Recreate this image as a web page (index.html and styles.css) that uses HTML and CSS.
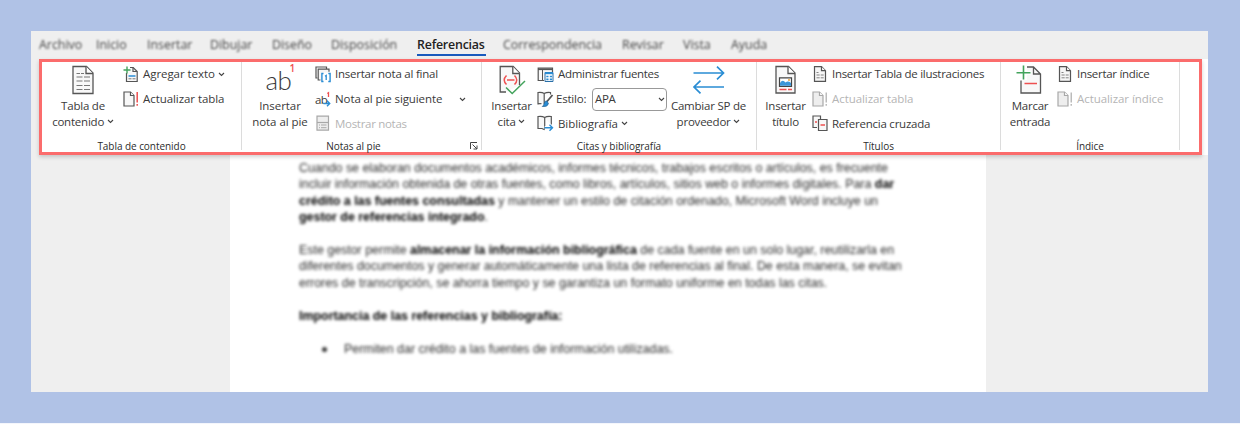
FILE: index.html
```html
<!DOCTYPE html>
<html lang="es">
<head>
<meta charset="utf-8">
<title>Referencias</title>
<link rel="stylesheet" href="styles.css">
</head>
<body>
<svg class="defs" width="0" height="0">
  <defs>
    <symbol id="chev" viewBox="0 0 7 5"><path d="M1 1l2.500 2.500L6 1" fill="none" stroke="#444" stroke-width="1.100"/></symbol>
    <symbol id="page-lines" viewBox="0 0 14 16"><path d="M1.500.7h7l4 4v10.600h-11z" fill="#f6f6f6" stroke="#555" stroke-width="1.200"/><path d="M8.500.7v4h4" fill="#fff" stroke="#555" stroke-width="1.200"/><path d="M3.500 6.500h2M3.500 9h3.200M7.700 9h3M3.500 11.800h3.200M7.700 11.800h3" stroke="#777" stroke-width=".9"/></symbol>
    <symbol id="page-off" viewBox="0 0 16 17"><path d="M1 1h6.500l3.500 3.500V15H1z" fill="#eee" stroke="#a8a8a8" stroke-width="1.200"/><path d="M7.500 1v3.500H11" fill="#fff" stroke="#a8a8a8" stroke-width="1.200"/><path d="M14.200 1.500v10M14.200 13v1.700" stroke="#aaa" stroke-width="1.200"/></symbol>
  </defs>
</svg>
<div class="app">
  <nav class="tabs">
    <span class="tab t1">Archivo</span><span class="tab t2">Inicio</span><span class="tab t3">Insertar</span><span class="tab t4">Dibujar</span><span class="tab t5">Diseño</span><span class="tab t6">Disposición</span><span class="tab t7 active"><b>Referencias</b></span><span class="tab t8">Correspondencia</span><span class="tab t9">Revisar</span><span class="tab t10">Vista</span><span class="tab t11">Ayuda</span>
  </nav>
  <div class="ribbon-row">
  <div class="ribbon">
    <section class="group g1">
      <div class="body">
        <div class="big">
          <svg class="bicon" width="24" height="30" viewBox="0 0 24 30"><path d="M2 1.500h13.500L22 8v20.500H2z" fill="#f8f8f8" stroke="#555" stroke-width="1.300"/><path d="M15 1.500V8.500h7" fill="#fff" stroke="#555" stroke-width="1.300"/><path d="M5.500 8.500h3.500M10 8.500h3M5.500 12h6M13 12h6M5.500 16h6M13 16h6M5.500 20.500h6M13 20.500h6M5.500 24.500h6M13 24.500h6" stroke="#777" stroke-width="1.100"/></svg>
          <span>Tabla de</span><span>contenido <svg class="chev"><use href="#chev"/></svg></span>
        </div>
        <div class="stack">
          <div class="cmd"><svg width="16" height="17" viewBox="0 0 16 17"><path d="M3.500 7v8.500h10.700V5.500l-4-4H7" fill="#f8f8f8" stroke="#555" stroke-width="1.200"/><path d="M10 1.500v4h4" fill="none" stroke="#555" stroke-width="1.200"/><path d="M5.500 12.800h3M9.500 12.800h3" stroke="#777"/><path d="M5.500 10h7" stroke="#2a8dd4" stroke-width="1.500"/><path d="M4 .5v7M.5 4h7" stroke="#43a35c" stroke-width="1.400"/></svg><span class="txt">Agregar texto</span><svg class="chev"><use href="#chev"/></svg></div>
          <div class="cmd"><svg width="16" height="17" viewBox="0 0 16 17"><path d="M1 1h6.500l3.500 3.500V15H1z" fill="#f8f8f8" stroke="#555" stroke-width="1.200"/><path d="M7.500 1v3.500H11" fill="#fff" stroke="#555" stroke-width="1.200"/><path d="M14.200 1v10.500M14.200 13v1.700" stroke="#ee5050" stroke-width="1.500"/></svg><span class="txt">Actualizar tabla</span></div>
        </div>
      </div>
      <div class="caption">Tabla de contenido</div>
    </section>
    <section class="group g2">
      <div class="body">
        <div class="big">
          <span class="bicon ab">ab<sup>1</sup></span>
          <span>Insertar</span><span>nota al pie</span>
        </div>
        <div class="stack">
          <div class="cmd"><svg width="16" height="17" viewBox="0 0 16 17"><path d="M2.500 12H1V1h10.500v2" fill="none" stroke="#555" stroke-width="1.200"/><path d="M5.500 14H3.200V3.200h10.800v2.500" fill="#f5f5f5" stroke="#555" stroke-width="1.200"/><path d="M6 6.500h10v10H6z" fill="#fff"/><path d="M8.500 7.500H6.900v8h1.600M13.300 7.500h1.800v8h-1.800" fill="none" stroke="#2a8dd4" stroke-width="1.400"/><path d="M10 10.300l1.200-.8V14" fill="none" stroke="#2a8dd4" stroke-width="1.300"/></svg><span class="txt n22">Insertar nota al final</span></div>
          <div class="cmd"><span class="abs">ab<svg width="16" height="17" viewBox="0 0 16 17"><path d="M12.300 2.500l1.200-.8V6" fill="none" stroke="#ee5050" stroke-width="1.300"/><path d="M8.500 12.500h6M12 9.800l2.700 2.700L12 15.200" fill="none" stroke="#2a8dd4" stroke-width="1.400"/></svg></span><span class="txt n10">Nota al pie siguiente</span><svg class="chev far"><use href="#chev"/></svg></div>
          <div class="cmd off"><svg width="16" height="17" viewBox="0 0 16 17"><path d="M2 1.200h11.500v14H2z" fill="#eee" stroke="#a8a8a8" stroke-width="1.200"/><path d="M2 7.500h11.500" stroke="#a8a8a8" stroke-width="1.200"/><path d="M4 10h1M6 10h5.500M4 12.700h1M6 12.700h5.500" stroke="#a8a8a8"/></svg><span class="txt n30">Mostrar notas</span></div>
        </div>
      </div>
      <div class="caption">Notas al pie</div>
      <svg class="launch" width="8" height="8" viewBox="0 0 8 8"><path d="M.5 7V.5H7M2.500 2.500L7 7M7 3.500V7H3.500" fill="none" stroke="#444"/></svg>
    </section>
    <section class="group g3">
      <div class="body">
        <div class="big">
          <svg class="bicon cite" width="28" height="30" viewBox="0 0 28 30"><path d="M8 27H2.200V1.500h13l6.300 6.500V20" fill="#f8f8f8" stroke="#555" stroke-width="1.300"/><path d="M14.800 1.500V8.500h6.700" fill="#fff" stroke="#555" stroke-width="1.300"/><path d="M8.500 10.500q-4.500 4.500 0 9M16.500 10.500q4.500 4.500 0 9M9 15h7.500" fill="none" stroke="#ee5050" stroke-width="1.500"/><path d="M8 22.500l6.200 6L27 16" fill="none" stroke="#43a35c" stroke-width="1.500"/></svg>
          <span>Insertar</span><span>cita <svg class="chev"><use href="#chev"/></svg></span>
        </div>
        <div class="stack">
          <div class="cmd"><svg width="17" height="17" viewBox="0 0 17 17"><path d="M7 14.500H1.200V2h14.300v4" fill="#f8f8f8" stroke="#555" stroke-width="1.200"/><path d="M1 3.200h14.500" stroke="#555" stroke-width="1.800"/><path d="M5.500 4v10" stroke="#555"/><path d="M8 6.500h8v9H8z" fill="#fff" stroke="#2a6fa8"/><path d="M8 7.200h8" stroke="#2a8dd4" stroke-width="2"/><path d="M9.300 10.500h2.200M12.800 10.500h2.200M9.300 13.300h2.200M12.800 13.300h2.200" stroke="#2a8dd4" stroke-width="1.700"/></svg><span class="txt n30">Administrar fuentes</span></div>
          <div class="cmd"><svg width="17" height="17" viewBox="0 0 17 17"><path d="M7.200 13V2.500Q5 1 1 1.500v11.300q2-.5 3.500 0M7.200 2.500q2.500-1.500 6.300-1v2" fill="#f8f8f8" stroke="#555" stroke-width="1.200"/><path d="M15.500 4L10 10.500" stroke="#555" stroke-width="1.800"/><path d="M10.200 10q-3-.5-3 2.500-.5 2-2 3 5 .7 6.300-2.500z" fill="#2a8dd4" stroke="#23567e" stroke-width=".6"/></svg><span class="txt estilo">Estilo:</span><span class="combo"><span>APA</span><svg class="chev"><use href="#chev"/></svg></span></div>
          <div class="cmd"><svg width="17" height="17" viewBox="0 0 17 17"><path d="M7.700 14V2.500Q5 .8 1 1.500v12h4l2.700 1.300M7.700 2.500q2.500-1.700 6.600-1V10" fill="#f8f8f8" stroke="#555" stroke-width="1.200"/><path d="M7.700 12.500h7.500M12.500 9.500l3 3-3 3" fill="none" stroke="#fff" stroke-width="3"/><path d="M7.500 12.700h8M12.500 9.700l3 3-3 3" fill="none" stroke="#2a8dd4" stroke-width="1.400"/></svg><span class="txt">Bibliografía</span><svg class="chev"><use href="#chev"/></svg></div>
        </div>
        <div class="big sp">
          <svg class="bicon" width="34" height="30" viewBox="0 0 34 30"><path d="M1.500 8h30M25 1.700L31.500 8 25 14.300M32 22H2M8.500 15.700L2 22l6.500 6.300" fill="none" stroke="#2a8dd4" stroke-width="1.700"/></svg>
          <span>Cambiar SP de</span><span>proveedor <svg class="chev"><use href="#chev"/></svg></span>
        </div>
      </div>
      <div class="caption">Citas y bibliografía</div>
    </section>
    <section class="group g4">
      <div class="body">
        <div class="big">
          <svg class="bicon" width="24" height="30" viewBox="0 0 24 30"><path d="M2 1.500h12.500L21 8v20H2z" fill="#f8f8f8" stroke="#555" stroke-width="1.300"/><path d="M14 1.500V8.500h7" fill="#fff" stroke="#555" stroke-width="1.300"/><path d="M5.500 12.800h12v8.500h-12z" fill="#fff" stroke="#444" stroke-width="1.200"/><path d="M6 18q2.500-4 5.500-.5 2.500-2 5.500.5v2.800H6z" fill="#3c96d8"/><circle cx="15" cy="15" r="1" fill="#e8a23a"/><path d="M5.500 24.500h7M14 24.500h4" stroke="#ee5050" stroke-width="1.400"/></svg>
          <span>Insertar</span><span>título</span>
        </div>
        <div class="stack">
          <div class="cmd"><svg width="14" height="16"><use href="#page-lines"/></svg><span class="txt n30">Insertar Tabla de ilustraciones</span></div>
          <div class="cmd off"><svg width="16" height="17"><use href="#page-off"/></svg><span class="txt">Actualizar tabla</span></div>
          <div class="cmd"><svg width="16" height="17" viewBox="0 0 16 17"><path d="M5 12.500H1V1h7.500v3" fill="#f8f8f8" stroke="#555" stroke-width="1.200"/><path d="M6.500 4.500h8.500V15.500H6.500z" fill="#f8f8f8" stroke="#555" stroke-width="1.200"/><path d="M3 7h2M8.500 10h4.500" stroke="#ee5050" stroke-width="1.400"/></svg><span class="txt n22">Referencia cruzada</span></div>
        </div>
      </div>
      <div class="caption">Títulos</div>
    </section>
    <section class="group g5">
      <div class="body">
        <div class="big">
          <svg class="bicon" width="28" height="30" viewBox="0 0 28 30"><path d="M5 15.500v12.500h19.500V9L17.500 2H11v13z" fill="#f8f8f8"/><path d="M5 15.500v12.500h19.500V9L17.500 2H11M17.500 2v7h7" fill="none" stroke="#555" stroke-width="1.300"/><path d="M7.500 .5v14M.5 7.800h14" stroke="#fff" stroke-width="4"/><path d="M7.500 .5v14M.5 7.800h14" stroke="#43a35c" stroke-width="1.600"/><path d="M8.500 18.500h12.500" stroke="#ee5050" stroke-width="1.500"/></svg>
          <span>Marcar</span><span>entrada</span>
        </div>
        <div class="stack">
          <div class="cmd"><svg width="14" height="16"><use href="#page-lines"/></svg><span class="txt n30">Insertar índice</span></div>
          <div class="cmd off"><svg width="16" height="17"><use href="#page-off"/></svg><span class="txt">Actualizar índice</span></div>
        </div>
      </div>
      <div class="caption">Índice</div>
    </section>
  </div>
  </div>
  <main class="canvas">
    <article class="sheet">
      <p>Cuando se elaboran documentos académicos, informes técnicos, trabajos escritos o artículos, es frecuente<br>incluir información obtenida de otras fuentes, como libros, artículos, sitios web o informes digitales. Para <b>dar</b><br><b>crédito a las fuentes consultadas</b> y mantener un estilo de citación ordenado, Microsoft Word incluye un<br><b>gestor de referencias integrado</b>.</p>
      <p>Este gestor permite <b>almacenar la información bibliográfica</b> de cada fuente en un solo lugar, reutilizarla en<br>diferentes documentos y generar automáticamente una lista de referencias al final. De esta manera, se evitan<br>errores de transcripción, se ahorra tiempo y se garantiza un formato uniforme en todas las citas.</p>
      <p><b class="head">Importancia de las referencias y bibliografía:</b></p>
      <ul><li>Permiten dar crédito a las fuentes de información utilizadas.</li></ul>
    </article>
  </main>
</div>
</body>
</html>
```

FILE: styles.css
```css
* { box-sizing: border-box; }
html { background: #f4f6fc; }
body { margin: 0; height: 423px; padding: 31px 32px 31px 31px; background: #b0c2e6; overflow: hidden; font-family: "Open Sans", "Noto Sans", sans-serif; color: #3a3a3a; }
.defs { display: block; height: 0; }
.app { height: 361px; background: #efefef; display: flex; flex-direction: column; overflow: hidden; }
.tabs { display: flex; height: 28px; flex: none; padding-left: 8px; font-size: 12.400px; line-height: 28px; white-space: nowrap; }
.tab { flex: none; filter: blur(1px); color: #444; }
.tab.active { filter: none; color: #222; letter-spacing: -.2px; }
.tab.active b { display: block; width: 69px; height: 25px; font-weight: 600; border-bottom: 2px solid #185abd; }
.t1 { width: 57px; } .t2 { width: 51px; } .t3 { width: 63px; } .t4 { width: 62px; }
.t5 { width: 59px; } .t6 { width: 86px; } .t7 { width: 86px; } .t8 { width: 119px; }
.t9 { width: 61px; } .t10 { width: 48px; }
.ribbon-row { flex: none; height: 96px; margin-left: 8px; background: #fff; position: relative; z-index: 1; }
.ribbon { display: flex; width: 1163px; height: 96px; border: 3px solid #fb6c6c; background: #fff; box-shadow: 0 2px 4px rgba(0,0,0,.18); }
.group { position: relative; display: flex; flex-direction: column; height: 88px; border-right: 1px solid #dcdcdc; }
.g1 { width: 200px; } .g2 { width: 240px; } .g3 { width: 275px; } .g4 { width: 244px; } .g5 { width: 179px; }
.body { display: flex; height: 76px; flex: none; }
.big { display: flex; flex-direction: column; align-items: center; flex: none; width: 56px; font-size: 11.500px; line-height: 15.500px; letter-spacing: -.22px; white-space: nowrap; }
.bicon { height: 30px; margin: 3px 0 3px; flex: none; }
.g1 .big { width: 78px; margin-left: 2px; margin-right: 1px; }
.g2 .big { width: 73px; padding-left: 3px; letter-spacing: -.05px; }
.g3 .big { padding-left: 3px; }
.g3 .big.sp { width: 80px; margin-left: 0; padding-left: 1px; }
.g4 .big { padding-left: 1px; }
.g5 .big { padding-left: 2px; }
.ab { font-family: Lato, "Open Sans", sans-serif; font-size: 26px; line-height: 30px; font-weight: 300; position: relative; letter-spacing: -.5px; margin-right: 3px; }
.ab sup { position: absolute; left: 24px; top: -4px; font-family: "Open Sans", sans-serif; font-size: 10px; line-height: 14px; font-weight: 600; color: #f05050; }
.stack { display: flex; flex-direction: column; flex: none; }
.g3 .stack { width: 130px; margin-left: -1px; margin-right: 1px; }
.g4 .stack { margin-left: -1px; }
.cmd { display: flex; align-items: center; height: 24.800px; font-size: 11.500px; line-height: 16px; white-space: nowrap; }
.cmd > svg:first-child { flex: none; margin-right: 4px; }
.cmd > svg[width="14"] { margin-left: 1px; margin-right: 5px; }
.txt { letter-spacing: -.06px; }
.n10 { letter-spacing: -.1px; }
.n22 { letter-spacing: -.23px; }
.n30 { letter-spacing: -.3px; }
.off { color: #b5b5b5; }
.chev { width: 7px; height: 5px; margin-left: 3px; vertical-align: 2px; }
.big .chev { margin-left: 0; }
.far { margin-left: 17px; }
.abs { width: 16px; margin-right: 4px; position: relative; line-height: 17px; letter-spacing: -.6px; }
.abs svg { position: absolute; left: 0; top: 0; }
.combo { display: flex; align-items: center; justify-content: space-between; flex: none; width: 75px; height: 23px; margin-left: 5px; padding: 0 1px 0 2px; border: 1px solid #999; border-radius: 4px; letter-spacing: -.3px; }
.estilo { width: 31px; margin-left: -2px; flex: none; letter-spacing: -.2px; }
.caption { font-size: 10px; line-height: 14px; padding-top: 1px; text-align: center; letter-spacing: -.05px; color: #2c2c2c; }
.g2 .caption { padding-right: 16px; }
.launch { position: absolute; right: 3px; bottom: 0; }
.canvas { flex: 1; padding-left: 199px; }
.sheet { width: 756px; height: 240px; padding: 5px 0 0 69px; background: #fff; font-family: "Liberation Sans", Arial, sans-serif; font-size: 12.410px; line-height: 16.400px; color: #2c2c2c; white-space: nowrap; }
.sheet p, .sheet ul { margin: 0 0 16.400px; filter: blur(1.350px); }
.sheet b { color: #000; }
.sheet ul { padding: 1px 0 0 23px; list-style: none; }
.sheet li { display: flex; align-items: center; }
.sheet li::before { content: ""; width: 5px; height: 5px; margin-right: 17px; border-radius: 50%; background: #333; }
```
